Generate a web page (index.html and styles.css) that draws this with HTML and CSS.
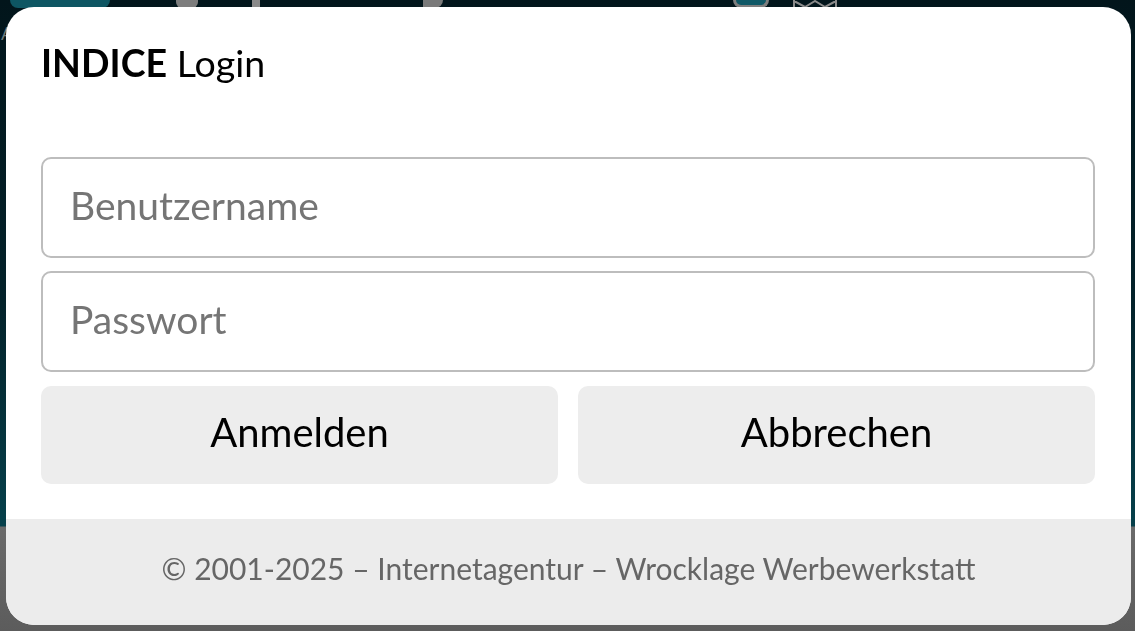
FILE: index.html
```html
<!DOCTYPE html>
<html lang="de">
<head>
    <meta charset="UTF-8">
    <meta name="viewport" content="width=device-width, initial-scale=1.0">
    <title>INDICE Login</title>
    <link rel="stylesheet" href="styles.css">
</head>
<body>
    <!-- Seite hinter dem Dialog -->
    <header class="page-head">
        <span class="peek peek-logo"></span>
        <span class="peek peek-a"></span>
        <span class="peek peek-b"></span>
        <span class="peek peek-c"></span>
        <span class="peek peek-round"></span>
        <svg class="peek-mail" width="44" height="8" viewBox="0 0 44 8">
            <path d="M1 0 V8 M43 0 V8 M1 1 L12 7 L22 1 L32 7 L43 1" fill="none" stroke="#8a8a8a" stroke-width="2"/>
        </svg>
    </header>
    <span class="peek-letter">A</span>

    <div class="modal">
        <form class="modal-body" id="loginForm">
            <h1 class="modal-title"><b>INDICE</b> Login</h1>
            <input class="field" type="text" placeholder="Benutzername">
            <input class="field" type="password" placeholder="Passwort">
            <div class="actions">
                <button type="submit" class="btn">Anmelden</button>
                <button type="button" class="btn">Abbrechen</button>
            </div>
        </form>
        <footer class="modal-foot">© 2001-2025 – Internetagentur – Wrocklage Werbewerkstatt</footer>
    </div>
</body>
</html>
```

FILE: styles.css
```css
html, body {
    height: 100%;
}

body {
    margin: 0;
    font-family: Lato, "Open Sans", sans-serif;
    background: linear-gradient(to bottom, #02151b 0, #03222a 300px, #06404b 526px, #6a6a6a 527px, #5c5c5c 100%);
    overflow: hidden;
}

/* Inhalt hinter dem Dialog, nur oben sichtbar */
.page-head {
    display: flex;
    align-items: flex-start;
    height: 10px;
}

.peek {
    display: block;
    height: 8px;
}

.peek-logo {
    width: 100px;
    margin-left: 10px;
    background: #0e5663;
    border-radius: 0 0 14px 14px;
}

.peek-a {
    width: 22px;
    margin-left: 66px;
    background: #7d7d7d;
    border-radius: 0 0 6px 6px;
}

.peek-b {
    width: 8px;
    margin-left: 54px;
    background: #8a8a8a;
}

.peek-c {
    width: 20px;
    margin-left: 163px;
    background: #7a7a7a;
    border-radius: 0 0 10px 0;
}

.peek-round {
    width: 36px;
    margin-left: 290px;
    background: #0f5866;
    border: 3px solid #7e7e7e;
    border-top: 0;
    border-radius: 0 0 18px 18px;
    box-sizing: border-box;
}

.peek-mail {
    margin-left: 24px;
}

.peek-letter {
    position: absolute;
    left: 1px;
    top: 22px;
    font-size: 18px;
    color: #6f7a7c;
}

/* Dialog */
.modal {
    position: fixed;
    top: 7px;
    left: 6px;
    right: 4px;
    bottom: 6px;
    display: flex;
    flex-direction: column;
    background: #fff;
    border-radius: 28px;
    overflow: hidden;
}

.modal-body {
    display: flex;
    flex-direction: column;
    padding: 33px 36px 35px 35px;
}

.modal-title {
    margin: 0 0 72px;
    font-size: 37.5px;
    font-weight: 400;
    line-height: 1.2;
    color: #000;
}

.modal-title b {
    font-weight: 700;
}

.field {
    height: 101px;
    margin: 0 0 13px;
    padding: 0 27px 6px;
    border: 2px solid #bdbdbd;
    border-radius: 10px;
    font-family: inherit;
    font-size: 39px;
    color: #222;
    box-sizing: border-box;
    outline: none;
}

.field::placeholder {
    color: #757575;
}

.actions {
    display: grid;
    grid-template-columns: 1fr 1fr;
    gap: 20px;
    margin-top: 1px;
}

.btn {
    height: 98px;
    padding-bottom: 7px;
    border: 0;
    border-radius: 10px;
    background: #ededed;
    font-family: inherit;
    font-size: 40px;
    color: #000;
}

.modal-foot {
    flex: 1;
    display: flex;
    align-items: center;
    justify-content: center;
    padding-bottom: 8px;
    background: #ececec;
    font-size: 30px;
    color: #666;
}
```
